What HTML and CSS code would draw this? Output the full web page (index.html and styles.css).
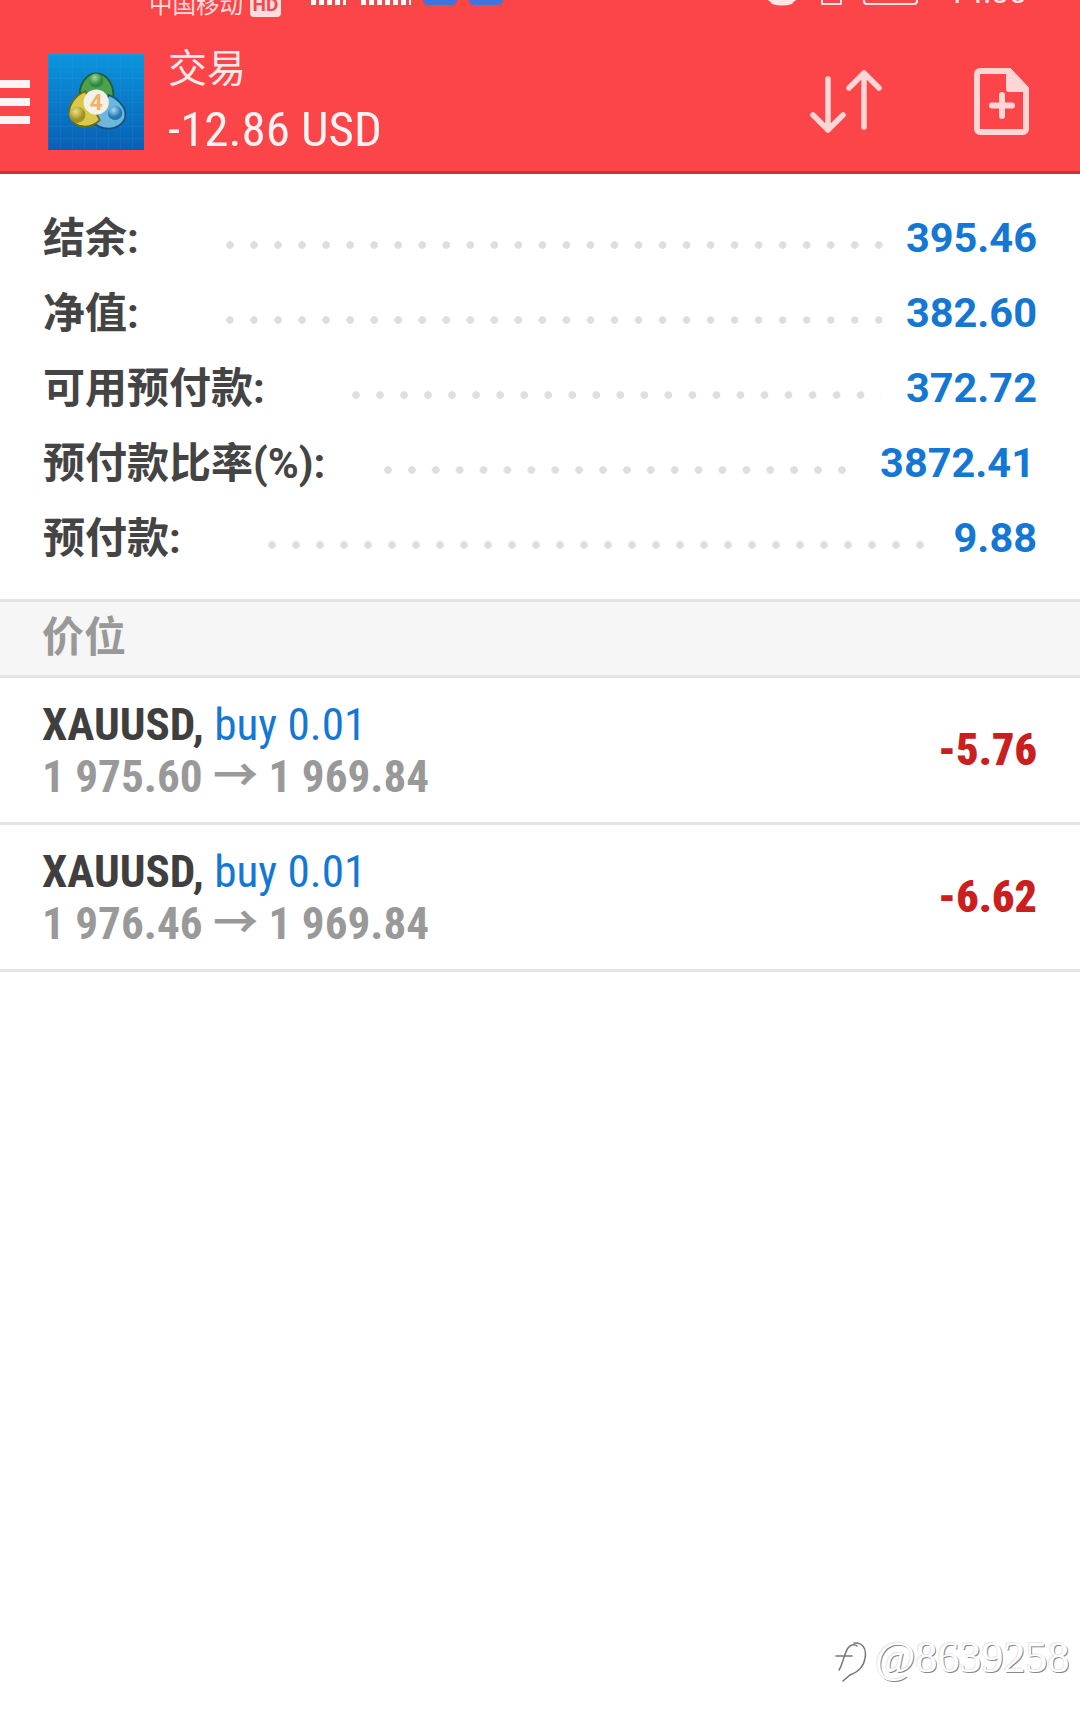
FILE: index.html
```html
<!DOCTYPE html>
<html lang="zh-CN">
<head>
  <meta charset="UTF-8">
  <title>交易</title>
  <link rel="stylesheet" href="styles.css">
</head>
<body>
  <header class="topbar">
    <div class="statusbar">
      <span class="carrier">中国移动</span><span class="hd">HD</span>
      <span class="signal signal-a"></span><span class="signal signal-b"></span>
      <span class="chip"></span><span class="chip"></span>
      <span class="status-right">
        <svg class="st-alarm" width="30" height="6" viewBox="0 0 30 6"><path d="M1 0q3 2 4 4 10 3 20 0 1-2 4-4z" fill="#ffe6e6"/></svg>
        <span class="st-phone"></span>
        <span class="st-batt"></span>
        <span class="clock">14:00</span>
      </span>
    </div>
    <div class="appbar">
      <div class="burger"><i></i><i></i><i></i></div>
      <svg class="logo" viewBox="0 0 96 96" width="96" height="96">
        <defs>
          <linearGradient id="bg" x1="0" y1="0" x2="0" y2="1">
            <stop offset="0" stop-color="#0b96dd"/>
            <stop offset="1" stop-color="#0a5fb4"/>
          </linearGradient>
          <pattern id="grid" width="12" height="12" patternUnits="userSpaceOnUse">
            <path d="M12 0H0V12" fill="none" stroke="#3aa6e6" stroke-opacity=".25"/>
          </pattern>
          <radialGradient id="ballG" cx=".4" cy=".3"><stop offset="0" stop-color="#a5d69a"/><stop offset="1" stop-color="#2f8a3f"/></radialGradient>
          <radialGradient id="ballY" cx=".4" cy=".3"><stop offset="0" stop-color="#eee08a"/><stop offset="1" stop-color="#9f9420"/></radialGradient>
          <radialGradient id="ballB" cx=".4" cy=".3"><stop offset="0" stop-color="#a9dcf2"/><stop offset="1" stop-color="#2378b4"/></radialGradient>
        </defs>
        <rect width="96" height="96" fill="url(#bg)"/>
        <rect width="96" height="96" fill="url(#grid)"/>
        <g transform="translate(5 5) scale(.9)">
          <path d="M48 16C60 16 68 28 67 44L48 52 30 44C28 30 36 16 48 16z" fill="#4ea04f" stroke="#1d5c34" stroke-width="2"/>
          <path d="M62 40C76 46 84 58 79 68 72 80 54 80 44 70L54 54z" fill="#6db6de" stroke="#12547f" stroke-width="2"/>
          <path d="M36 36C24 40 15 54 19 64 24 78 42 78 52 68L44 52z" fill="#d9c84a" stroke="#6d6a18" stroke-width="2"/>
          <circle cx="48" cy="24" r="8" fill="url(#ballG)"/>
          <circle cx="27" cy="62" r="9" fill="url(#ballY)"/>
          <circle cx="69" cy="60" r="8" fill="url(#ballB)"/>
          <circle cx="48" cy="48" r="14" fill="#f4f1e6"/>
          <text x="48" y="57" class="logo-four">4</text>
        </g>
      </svg>
      <div class="title">
        <div class="title-name">交易</div>
        <div class="title-sum">-12.86 USD</div>
      </div>
      <svg class="icon-sort" width="73" height="63" viewBox="0 0 73 63" fill="none" stroke="#ffd6d6" stroke-width="5.5" stroke-linecap="round" stroke-linejoin="round">
        <path d="M18 9v51M3 45l15 15 15-15"/>
        <path d="M54 3v54M39 18L54 3l15 15"/>
      </svg>
      <svg class="icon-doc" width="55" height="67" viewBox="0 0 55 67" fill="none" stroke="#ffd6d6" stroke-width="6" stroke-linejoin="round">
        <path d="M6 3h29l17 18v40a3 3 0 0 1-3 3H6a3 3 0 0 1-3-3V6a3 3 0 0 1 3-3z"/>
        <path d="M35 3v18h17z" fill="#ffd6d6"/>
        <path d="M28 27v21M18 37.500h20" stroke-linecap="round"/>
      </svg>
    </div>
  </header>

  <section class="summary">
    <div class="row"><span class="label">结余:</span><span class="dots dots-a"></span><span class="num">395.46</span></div>
    <div class="row"><span class="label">净值:</span><span class="dots dots-a"></span><span class="num">382.60</span></div>
    <div class="row"><span class="label">可用预付款:</span><span class="dots dots-c"></span><span class="num">372.72</span></div>
    <div class="row"><span class="label">预付款比率(%):</span><span class="dots dots-d"></span><span class="num num-wide">3872.41</span></div>
    <div class="row"><span class="label">预付款:</span><span class="dots dots-e"></span><span class="num">9.88</span></div>
  </section>

  <div class="section-head">价位</div>

  <div class="position">
    <div class="pos-info">
      <div class="pos-top"><b>XAUUSD,</b> <span class="pos-buy">buy 0.01</span></div>
      <div class="pos-price">1 975.60 → 1 969.84</div>
    </div>
    <div class="pos-profit">-5.76</div>
  </div>
  <div class="position">
    <div class="pos-info">
      <div class="pos-top"><b>XAUUSD,</b> <span class="pos-buy">buy 0.01</span></div>
      <div class="pos-price">1 976.46 → 1 969.84</div>
    </div>
    <div class="pos-profit">-6.62</div>
  </div>

  <div class="watermark">
    <svg class="wm-logo" width="36" height="40" viewBox="0 0 36 40" fill="none" stroke-linecap="round">
      <path class="wm-stroke" d="M6 28C10 22 11 12 15 6 18 2 22 2 24 4M3 14h16M21 1C29 0 34 6 32 16 31 24 25 30 17 33L10 39"/>
    </svg>
    <span>@8639258</span>
  </div>
</body>
</html>
```

FILE: styles.css
```css
* {
  box-sizing: border-box;
}

html, body {
  margin: 0;
  height: 100%;
}

body {
  position: relative;
  width: 1080px;
  height: 1715px;
  overflow: hidden;
  background: #fff;
  font-family: Roboto, "Noto Sans CJK SC", sans-serif;
}

/* Header */
.topbar {
  height: 174px;
  background: #fb4548;
  border-bottom: 3px solid #d12f36;
  overflow: hidden;
}

.statusbar {
  height: 18px;
  display: flex;
  align-items: flex-start;
  color: #ffdcdc;
  padding: 0 53px 0 149px;
}

.carrier {
  align-self: flex-end;
  font-size: 23.500px;
  line-height: 26px;
}

.hd {
  align-self: flex-end;
  width: 31px;
  margin-left: 7px;
  margin-bottom: 1px;
  background: #ffdede;
  color: #fb4548;
  font-size: 19px;
  font-weight: 700;
  line-height: 24px;
  text-align: center;
  border-radius: 4px;
}

.signal {
  height: 5px;
  background: repeating-linear-gradient(90deg, #fff 0 5px, transparent 5px 8px);
}

.signal-a {
  width: 35px;
  margin-left: 30px;
}

.signal-b {
  width: 50px;
  margin-left: 15px;
}

.chip {
  width: 34px;
  height: 5px;
  margin-left: 12px;
  background: #3f74dc;
  border-radius: 0 0 5px 5px;
}

.status-right {
  margin-left: auto;
  display: flex;
  align-items: flex-start;
}

.st-phone {
  width: 21px;
  height: 5px;
  margin-left: 24px;
  border: 2px solid #ffe6e6;
  border-top: 0;
  border-radius: 0 0 2px 2px;
}

.st-batt {
  width: 55px;
  height: 5px;
  margin-left: 21px;
  border: 2px solid #ffe6e6;
  border-top: 0;
  border-radius: 0 0 4px 4px;
}

.clock {
  margin-left: 29px;
  margin-top: -24px;
  font-size: 32px;
  line-height: 32px;
  color: #ffe6e6;
}

.appbar {
  height: 153px;
  padding-top: 14px;
  display: flex;
  align-items: center;
}

.burger {
  width: 30px;
  margin-right: 18px;
  display: flex;
  flex-direction: column;
  gap: 10px;
}

.burger i {
  display: block;
  height: 8px;
  background: #fdf2f4;
}

.logo {
  flex: none;
}

.logo-four {
  font-size: 25px;
  font-weight: 700;
  fill: #efb26a;
  text-anchor: middle;
}

.title {
  margin-left: 24px;
  color: #fff;
}

.title-name {
  font-size: 39px;
  line-height: 46px;
  color: #ffe9e9;
}

.title-sum {
  margin-top: 10px;
  font-size: 49px;
  line-height: 56px;
  font-stretch: 75%;
  color: #fff2f2;
}

.icon-sort {
  margin-left: auto;
}

.icon-doc {
  margin-left: 91px;
  margin-right: 51px;
}

/* Account summary */
.summary {
  padding: 26px 43px 25px 43px;
  height: 428px;
  border-bottom: 3px solid #e4e4e4;
}

.row {
  height: 75px;
  display: flex;
  align-items: center;
}

.label {
  margin-top: 3px;
  font-size: 42px;
  line-height: 56px;
  font-weight: 700;
  color: #444;
  white-space: nowrap;
}

/* the cell stretches a little so a dot is never cut at the end */
.dots {
  flex: 1;
  height: 8px;
  margin-top: 14px;
  background: radial-gradient(circle at 4px 4px, #dedede 3.500px, transparent 4px) left top / 24px 8px round no-repeat;
}

.dots-a { margin-left: 87px; margin-right: 7px; }
.dots-c { margin-left: 87px; margin-right: 25px; }
.dots-d { margin-left: 59px; margin-right: 18px; }
.dots-e { margin-left: 87px; margin-right: 14px; }

.num {
  font-size: 41.500px;
  font-weight: 700;
  color: #1477d4;
}

.num-wide {
  margin-right: 2px;
}

/* Positions */
.section-head {
  height: 76px;
  padding-left: 42px;
  background: #f6f6f6;
  border-bottom: 3px solid #e4e4e4;
  font-size: 42px;
  font-weight: 700;
  line-height: 72px;
  color: #999;
}

.position {
  height: 147px;
  padding: 0 43px 0 42px;
  display: flex;
  align-items: center;
  justify-content: space-between;
  border-bottom: 3px solid #e4e4e4;
}

.pos-info {
  padding-top: 3px;
}

.pos-top {
  font-size: 45.200px;
  line-height: 50px;
  font-stretch: 75%;
}

.pos-top b {
  color: #3f3f3f;
}

.pos-buy {
  color: #1477d4;
}

.pos-price {
  font-size: 45.200px;
  line-height: 53px;
  font-weight: 700;
  font-stretch: 75%;
  color: #999;
}

.pos-profit {
  font-size: 44px;
  font-weight: 900;
  font-stretch: 75%;
  color: #c9201f;
}

/* Embossed watermark in the corner */
.watermark {
  position: absolute;
  left: 833px;
  top: 1633px;
  display: flex;
  align-items: flex-start;
  font-family: "Liberation Serif", serif;
  font-size: 44px;
  line-height: 50px;
  color: #fff;
  text-shadow: 1px 1px 0 #888, -1px -1px 0 #e8e8e8;
}

.wm-logo {
  margin-top: 9px;
  margin-right: 6px;
}

.wm-stroke {
  stroke: #777;
  stroke-width: 1.500px;
}
```
